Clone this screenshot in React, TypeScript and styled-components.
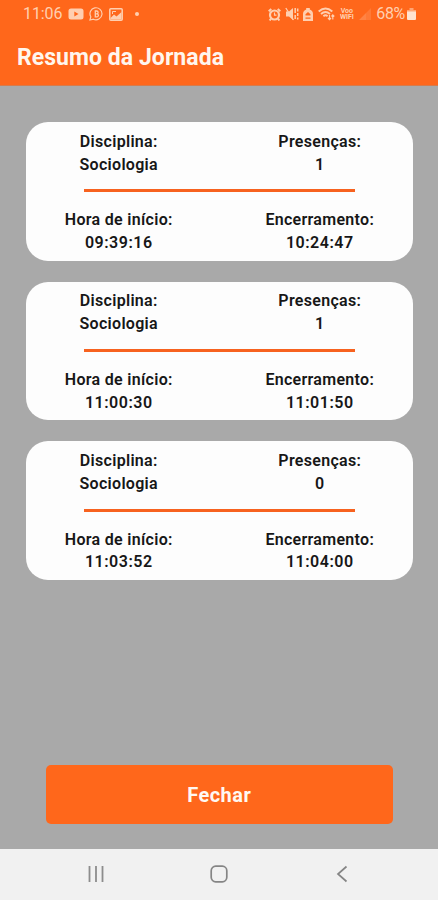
import React from 'react';
import styled, { createGlobalStyle } from 'styled-components';

const GlobalStyle = createGlobalStyle`
  * { box-sizing: border-box; }
  body { margin: 0; background: #a9a9a9; font-family: Roboto, "Liberation Sans", sans-serif; }
`;

const Screen = styled.div`
  width: 438px;
  height: 900px;
  display: flex;
  flex-direction: column;
  background: #a9a9a9;
  overflow: hidden;
`;

const StatusBar = styled.div`
  flex: none;
  height: 28px;
  padding: 0 22px 0 23px;
  display: flex;
  align-items: center;
  justify-content: space-between;
  background: #ff671b;
  color: #ffcfb0;
`;

const StatusGroup = styled.div<{ $gap: number }>`
  display: flex;
  align-items: center;
  gap: ${(p) => p.$gap}px;
  svg { display: block; flex: none; }
`;

const StatusText = styled.span<{ $spacing: number }>`
  font-size: 16px;
  line-height: 28px;
  letter-spacing: ${(p) => p.$spacing}px;
  white-space: nowrap;
`;

const Header = styled.header`
  flex: none;
  height: 58px;
  padding: 2px 17px 0;
  display: flex;
  align-items: center;
  background: #ff671b;
  border-bottom: 1px solid #d67b4c;
`;

const Title = styled.h1`
  margin: 0;
  font-size: 23px;
  line-height: 30px;
  font-weight: 700;
  letter-spacing: 0.05px;
  color: #fff6ee;
`;

const Content = styled.main`
  flex: 1;
  display: flex;
  flex-direction: column;
  justify-content: space-between;
  padding: 36px 25px 25.5px 25.5px;
`;

const CardList = styled.div`
  display: flex;
  flex-direction: column;
  gap: 21.2px;
`;

const Card = styled.section`
  height: 138.5px;
  padding-top: 8.8px;
  border-radius: 22px;
  background: #fdfdfd;
`;

const Row = styled.div`
  display: grid;
  grid-template-columns: 130px 130px;
  column-gap: 71px;
  justify-content: center;
`;

const Field = styled.div`
  text-align: center;
  font-size: 16px;
  line-height: 22.7px;
  font-weight: 600;
  letter-spacing: 0.3px;
  color: #171717;
  white-space: nowrap;
`;

const Value = styled.div<{ $time?: boolean }>`
  letter-spacing: ${(p) => (p.$time ? 0.5 : 0.3)}px;
`;

const Divider = styled.div`
  width: 271px;
  height: 3px;
  margin: 13.2px auto 17px;
  background: #f7621f;
`;

const CloseButton = styled.button`
  width: 347px;
  height: 59px;
  margin: 0 auto;
  padding: 2px 0 0;
  border: 0;
  border-radius: 5px;
  background: #ff671b;
  color: #fff8f2;
  font: 700 20px/24px Roboto, "Liberation Sans", sans-serif;
  letter-spacing: 0.45px;
`;

const NavBar = styled.nav`
  flex: none;
  height: 51px;
  display: grid;
  grid-template-columns: repeat(3, 123px);
  justify-content: center;
  align-items: center;
  justify-items: center;
  padding-bottom: 2px;
  background: #f1f1f1;
  svg { display: block; }
`;

type Session = { subject: string; attendance: number; start: string; end: string };

const sessions: Session[] = [
  { subject: 'Sociologia', attendance: 1, start: '09:39:16', end: '10:24:47' },
  { subject: 'Sociologia', attendance: 1, start: '11:00:30', end: '11:01:50' },
  { subject: 'Sociologia', attendance: 0, start: '11:03:52', end: '11:04:00' },
];

const VideoIcon = () => (
  <svg width="16" height="12" viewBox="0 0 16 12">
    <path fill="currentColor" fillRule="evenodd" d="M3 .5h10q2.500 0 2.500 2.500v6q0 2.500-2.500 2.500H3Q.5 11.500.5 9V3Q.5.500 3 .5ZM6.300 3.500v5L10.500 6Z" />
  </svg>
);

const ChatIcon = () => (
  <svg width="15" height="14" viewBox="0 0 15 14" fill="none" stroke="currentColor">
    <path strokeWidth="1.200" d="M1 13 1.800 9.800A6 6 0 1 1 4.400 12.200Z" />
    <path strokeWidth="1.300" d="M6.300 4h1.400a1.400 1.400 0 0 1 0 2.800H6.300Zm0 2.800h1.600a1.500 1.500 0 0 1 0 3H6.300Z" />
  </svg>
);

const PictureIcon = () => (
  <svg width="14" height="13" viewBox="0 0 14 13">
    <rect x=".8" y=".8" width="12.400" height="11.400" rx="1" fill="none" stroke="currentColor" strokeWidth="1.500" />
    <path d="M1.500 10 5 6.500 7.500 8.500 12.500 4v7.500h-11Z" fill="currentColor" />
    <path d="M3.500 6V3.500H7" fill="none" stroke="currentColor" />
  </svg>
);

const DotIcon = () => (
  <svg width="4" height="4" viewBox="0 0 4 4"><circle cx="2" cy="2" r="2" fill="currentColor" /></svg>
);

const AlarmIcon = () => (
  <svg width="13" height="13" viewBox="0 0 13 13" fill="none" stroke="currentColor">
    <circle cx="6.500" cy="7" r="4.500" strokeWidth="2.200" />
    <path strokeWidth="1.200" d="M6.500 4.500V7.200H8.500" />
    <path strokeWidth="2" d="M.7 3.300 3.300 1M9.700 1l2.600 2.300M3 10.500l-1.300 2M10 10.500l1.300 2" />
  </svg>
);

const MuteIcon = () => (
  <svg width="14" height="14" viewBox="0 0 14 14">
    <path fill="currentColor" d="M1 4.500h3L8 1v12L4 9.500H1Z" />
    <path stroke="currentColor" strokeWidth="1.300" d="M.8 1 8.500 13" />
    <path stroke="currentColor" strokeWidth="1.500" d="M10.200 1v5M10.200 8v4M12.700 1.500v3M12.700 6v3M12.700 10.500v2" />
  </svg>
);

const SaverIcon = () => (
  <svg width="10" height="13" viewBox="0 0 10 13">
    <path fill="currentColor" fillRule="evenodd" d="M3.200 0h3.600v1.500Q10 2.500 10 6v7H0V6Q0 2.500 3.200 1.500ZM2.500 6.200v1.300h5V6.200L5 4Zm0 3.300v1.200h5V9.500Z" />
  </svg>
);

const WifiIcon = () => (
  <svg width="17" height="14" viewBox="0 0 17 14" fill="none" stroke="currentColor">
    <path strokeWidth="1.900" d="M.7 4.500Q7.500-1.700 14.300 4.500M3 7Q7.500 3 12 7M5.400 9.200Q7.500 7.500 9.600 9.200" />
    <path strokeWidth="1.200" d="M11.500 8v4.500M10 11l1.500 1.700L13 11M14.800 12.500V8M13.500 9.500 14.800 8l1.500 1.500" />
  </svg>
);

const CarrierLabel = styled.span`
  width: 16px;
  font-size: 7px;
  line-height: 6px;
  font-weight: 700;
  letter-spacing: -0.1px;
  text-align: center;
`;

const SignalIcon = () => (
  <svg width="12" height="12" viewBox="0 0 12 12" fill="currentColor">
    <path opacity=".18" d="M0 12 12 0v12Z" />
    <path opacity=".12" d="M7 5v7H0Z" />
  </svg>
);

const BatteryIcon = () => (
  <svg width="9" height="12" viewBox="0 0 9 12">
    <path fill="currentColor" opacity=".6" d="M2.500 0h4v2H9v2H0V2h2.500Z" />
    <path fill="#ffe3d0" d="M0 3.500h9V11q0 1-1 1H1q-1 0-1-1Z" />
  </svg>
);

const LeftGroup = styled(StatusGroup)`
  svg:last-child { margin-left: 6px; }
`;

const BatteryGroup = styled(StatusGroup)`
  margin-left: 1px;
`;

const RecentsIcon = () => (
  <svg width="18" height="18" viewBox="0 0 18 18" stroke="#8d8d8d" strokeWidth="1.800">
    <path d="M2.500 1v16M9 1v16M15.500 1v16" />
  </svg>
);

const HomeIcon = () => (
  <svg width="18" height="18" viewBox="0 0 18 18" fill="none" stroke="#858585" strokeWidth="1.700">
    <rect x="1.200" y="1.200" width="15.600" height="15.600" rx="4.500" />
  </svg>
);

const BackIcon = () => (
  <svg width="18" height="18" viewBox="0 0 18 18" fill="none" stroke="#858585" strokeWidth="1.700">
    <path d="M13.500 1.500 5 9l8.500 7.500" />
  </svg>
);

const SessionCard = ({ session }: { session: Session }) => (
  <Card>
    <Row>
      <Field>Disciplina:<Value>{session.subject}</Value></Field>
      <Field>Presenças:<Value>{session.attendance}</Value></Field>
    </Row>
    <Divider />
    <Row>
      <Field>Hora de início:<Value $time>{session.start}</Value></Field>
      <Field>Encerramento:<Value $time>{session.end}</Value></Field>
    </Row>
  </Card>
);

export default function App() {
  return (
    <>
      <GlobalStyle />
      <Screen>
        <StatusBar>
          <LeftGroup $gap={5.3}>
            <StatusText $spacing={-0.1}>11:06</StatusText>
            <VideoIcon />
            <ChatIcon />
            <PictureIcon />
            <DotIcon />
          </LeftGroup>
          <StatusGroup $gap={4.2}>
            <AlarmIcon />
            <MuteIcon />
            <SaverIcon />
            <WifiIcon />
            <CarrierLabel>Voo WIFI</CarrierLabel>
            <SignalIcon />
            <BatteryGroup $gap={2}>
              <StatusText $spacing={-0.3}>68%</StatusText>
              <BatteryIcon />
            </BatteryGroup>
          </StatusGroup>
        </StatusBar>
        <Header><Title>Resumo da Jornada</Title></Header>
        <Content>
          <CardList>
            {sessions.map((session) => <SessionCard key={session.start} session={session} />)}
          </CardList>
          <CloseButton>Fechar</CloseButton>
        </Content>
        <NavBar>
          <RecentsIcon />
          <HomeIcon />
          <BackIcon />
        </NavBar>
      </Screen>
    </>
  );
}
